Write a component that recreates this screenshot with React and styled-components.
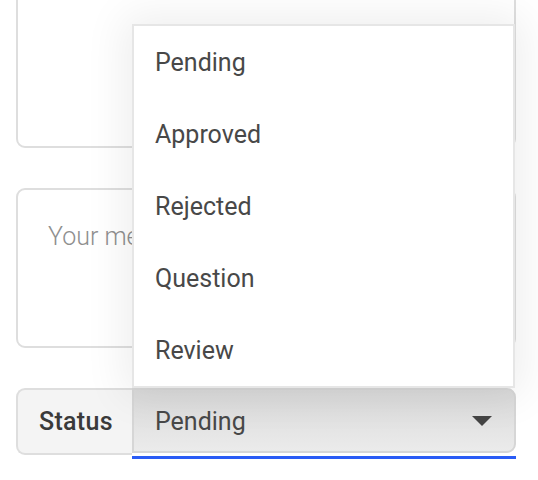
import React from "react";
import styled, { createGlobalStyle } from "styled-components";

const Global = createGlobalStyle`
  html, body { margin: 0; padding: 0; background: #fff; overflow: hidden; }
  body { font-family: Roboto, "Noto Sans", Arial, sans-serif; color: #444; }
`;

const Page = styled.div`
  display: flex;
  flex-direction: column;
  gap: 40px;
  width: 500px;
  margin: -12px 0 0 16px;
`;

const TextArea = styled.textarea`
  box-sizing: border-box;
  display: block;
  width: 500px;
  height: 160px;
  margin: 0;
  padding: 32px 30px;
  border: 2px solid #dedede;
  border-radius: 9px;
  background: #fff;
  resize: none;
  outline: none;
  font-family: Roboto, Arial, sans-serif;
  font-size: 25px;
  font-weight: 300;
  color: #444;
  &::placeholder { color: #8f8f8f; opacity: 1; }
`;

const Group = styled.div`
  display: flex;
  align-items: flex-start;
`;

const Label = styled.div`
  box-sizing: border-box;
  width: 116px;
  height: 67px;
  display: flex;
  align-items: center;
  padding-left: 21px;
  border: 2px solid #dedede;
  border-right: none;
  border-radius: 9px 0 0 9px;
  background: #f4f4f4;
  font-size: 25px;
  font-weight: 500;
  letter-spacing: 0.3px;
  color: #3a3a3a;
`;

const SelectWrap = styled.div`
  position: relative;
  flex: 1;
  display: flex;
  flex-direction: column;
  gap: 3px;
`;

const SelectBox = styled.div`
  box-sizing: border-box;
  height: 65px;
  display: flex;
  align-items: center;
  justify-content: space-between;
  padding: 1px 22px 0 21px;
  border: 2px solid #d6d6d6;
  border-radius: 0 9px 9px 0;
  background: linear-gradient(#d9d9d9, #ebebeb);
  font-size: 25px;
  color: #484848;
`;

const Underline = styled.div`
  height: 3px;
  background: #2a5cf5;
`;

const Menu = styled.ul`
  position: absolute;
  left: 0;
  right: 1px;
  bottom: 100%;
  margin: 0;
  padding: 0;
  list-style: none;
  background: #fff;
  border: 2px solid #e6e6e6;
  box-shadow: 0 0 40px 8px rgba(0, 0, 0, 0.07);
`;

const Item = styled.li`
  height: 72px;
  display: flex;
  align-items: center;
  padding: 1px 0 0 21px;
  box-sizing: border-box;
  font-size: 25px;
  color: #484848;
`;

const Arrow = () => (
  <svg width="20" height="10" viewBox="0 0 20 10">
    <path d="M0 0 H20 L10 10 Z" fill="#444" />
  </svg>
);

const options = ["Pending", "Approved", "Rejected", "Question", "Review"];

export default function App() {
  return (
    <>
      <Global />
      <Page>
        <TextArea />
        <TextArea placeholder="Your message" />
        <Group>
          <Label>Status</Label>
          <SelectWrap>
            <Menu>
              {options.map((o) => (
                <Item key={o}>{o}</Item>
              ))}
            </Menu>
            <SelectBox>
              <span>Pending</span>
              <Arrow />
            </SelectBox>
            <Underline />
          </SelectWrap>
        </Group>
      </Page>
    </>
  );
}
